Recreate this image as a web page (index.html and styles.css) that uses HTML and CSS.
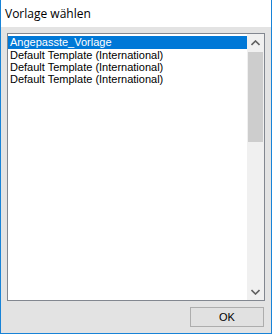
FILE: index.html
```html
<!DOCTYPE html>
<html lang="de">
<head>
    <meta charset="UTF-8">
    <title>Vorlage wählen</title>
    <link rel="stylesheet" href="styles.css">
</head>
<body>

<div class="window">
    <div class="titlebar">Vorlage wählen</div>
    <div class="content">
        <div class="listbox">
            <ul class="items">
                <li class="item selected">Angepasste_Vorlage</li>
                <li class="item">Default Template (International)</li>
                <li class="item">Default Template (International)</li>
                <li class="item">Default Template (International)</li>
            </ul>
            <div class="scrollbar">
                <div class="arrow">
                    <svg width="9" height="6" viewBox="0 0 9 6"><path d="M0.5 5 L4.5 1 L8.5 5" fill="none" stroke="#606060" stroke-width="1.6"/></svg>
                </div>
                <div class="track">
                    <div class="thumb"></div>
                </div>
                <div class="arrow">
                    <svg width="9" height="6" viewBox="0 0 9 6"><path d="M0.5 1 L4.5 5 L8.5 1" fill="none" stroke="#606060" stroke-width="1.6"/></svg>
                </div>
            </div>
        </div>
        <div class="buttons">
            <button class="btn">OK</button>
        </div>
    </div>
</div>

</body>
</html>
```

FILE: styles.css
```css
html, body{
    margin: 0;
    padding: 0;
    background: #ffffff;
}
.window{
    width: 272px;
    height: 334px;
    box-sizing: border-box;
    border: 1px solid #1883d7;
    border-top: none;
    display: flex;
    flex-direction: column;
    font-family: "Liberation Sans", Arial, sans-serif;
}
.titlebar{
    height: 27px;
    line-height: 27px;
    padding-left: 4px;
    background: #ffffff;
    color: #000000;
    font-family: "Open Sans", "Noto Sans", sans-serif;
    font-size: 12px;
}
.content{
    flex: 1;
    background: #e3e3e3;
    padding: 6px 6px 0 6px;
    display: flex;
    flex-direction: column;
}
.listbox{
    height: 268px;
    box-sizing: border-box;
    border: 1px solid #828790;
    background: #ffffff;
    display: flex;
}
.items{
    flex: 1;
    list-style: none;
    margin: 0;
    padding: 1px 0 0 0;
}
.item{
    line-height: 12px;
    padding-left: 2px;
    font-size: 11px;
    color: #000000;
    white-space: nowrap;
}
.item.selected{
    margin-top: 1px;
    padding-bottom: 1px;
    background: #0078d7;
    color: #ffffff;
}
.scrollbar{
    width: 17px;
    background: #f0f0f0;
    display: flex;
    flex-direction: column;
}
.arrow{
    height: 17px;
    display: flex;
    align-items: center;
    justify-content: center;
}
.track{
    flex: 1;
    padding: 1px 1px 0 1px;
}
.thumb{
    height: 90px;
    background: #cdcdcd;
}
.buttons{
    display: flex;
    justify-content: flex-end;
    padding: 6px 1px 0 0;
}
.btn{
    width: 74px;
    height: 20px;
    box-sizing: border-box;
    border: 1px solid #adadad;
    background: #e1e1e1;
    font-family: "Liberation Sans", Arial, sans-serif;
    font-size: 11px;
    color: #000000;
    padding: 0;
}
```
